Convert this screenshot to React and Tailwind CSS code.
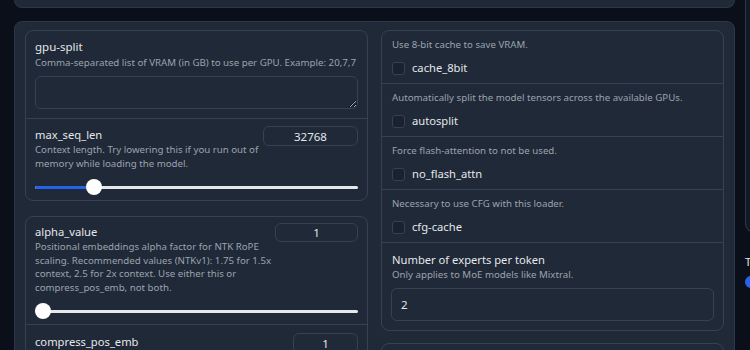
import React from "react";

const desc = "text-[9.7px] leading-[14px] text-[#9ca3af]";
const lbl = "text-[11.2px] leading-[16px] text-[#e5e7eb]";
const numInput =
  "block rounded-[6px] border border-[#374151] bg-[#1f2937] text-center text-[11.5px] leading-[17px] text-[#e5e7eb] outline-none";

function Slider({ fill }) {
  return (
    <div className="relative h-[16px] flex items-center">
      <div className="h-[3px] w-full rounded-full bg-[#e5e7eb]" />
      <div
        className="absolute left-0 top-[6.5px] h-[3px] rounded-l-full bg-[#2563eb]"
        style={{ width: fill }}
      />
      <div
        className="absolute top-0 h-[16px] w-[16px] rounded-full bg-white"
        style={{ left: Math.max(0, fill - 8) }}
      />
    </div>
  );
}

function CheckSection({ text, name, first }) {
  return (
    <div className={`px-[10px] pt-[7px] pb-[7px] ${first ? "" : "border-t border-[#374151]"}`}>
      <div className={desc}>{text}</div>
      <div className="mt-[8px] flex h-[16px] items-center gap-[7px]">
        <div className="h-[13px] w-[13px] rounded-[3px] border border-[#374151] bg-[#1a2230]" />
        <span className="text-[11.2px] leading-[16px] text-[#e5e7eb]">{name}</span>
      </div>
    </div>
  );
}

export default function App() {
  return (
    <div
      className="flex h-[350px] w-[750px] gap-[10px] overflow-hidden bg-[#0b0f19] pl-[14px]"
      style={{ fontFamily: '"Noto Sans", "Open Sans", sans-serif' }}
    >
      {/* main column */}
      <div className="w-[721px] shrink-0">
        <div className="h-[8px] rounded-b-[8px] border border-t-0 border-[#2d3748] bg-[#1f2937]" />
        <div className="mt-[13px] rounded-[8px] border border-[#2d3748] bg-[#1f2937] px-[10px] pt-[8px] pb-[10px]">
          <div className="grid grid-cols-2 gap-[13px]">
            {/* left column */}
            <div className="flex flex-col">
              <div className="rounded-[8px] border border-[#374151]">
                <div className="px-[9px] pt-[7px] pb-[9px]">
                  <div className="text-[11.5px] leading-[18px] text-[#e5e7eb]">gpu-split</div>
                  <div className={desc}>
                    Comma-separated list of VRAM (in GB) to use per GPU. Example: 20,7,7
                  </div>
                  <textarea
                    readOnly
                    className="mt-[6px] block h-[33px] w-full resize-y rounded-[6px] border border-[#374151] bg-[#1f2937] outline-none"
                  />
                </div>
                <div className="border-t border-[#374151] px-[9px] pt-[8px] pb-[5px]">
                  <div className="flex justify-between">
                    <div className="w-[228px]">
                      <div className={lbl}>max_seq_len</div>
                      <div className={desc}>
                        Context length. Try lowering this if you run out of memory while loading the model.
                      </div>
                    </div>
                    <input readOnly value="32768" className={`${numInput} -mt-[1px] h-[20px] w-[95px]`} />
                  </div>
                  <div className="mt-[8px]">
                    <Slider fill={58.5} />
                  </div>
                </div>
              </div>

              <div className="mt-[15px] rounded-[8px] border border-[#374151]">
                <div className="px-[9px] pt-[7px] pb-[5px]">
                  <div className="flex justify-between">
                    <div className="w-[238px]">
                      <div className={lbl}>alpha_value</div>
                      <div className="text-[9.7px] leading-[13.5px] text-[#9ca3af]">
                        Positional embeddings alpha factor for NTK RoPE scaling. Recommended values (NTKv1): 1.75 for 1.5x context, 2.5 for 2x context. Use either this or compress_pos_emb, not both.
                      </div>
                    </div>
                    <input readOnly value="1" className={`${numInput} -mt-[1px] h-[19px] w-[83px]`} />
                  </div>
                  <div className="mt-[9px]">
                    <Slider fill={8} />
                  </div>
                </div>
                <div className="border-t border-[#374151] px-[9px] pt-[9px] pb-[10px]">
                  <div className="flex justify-between">
                    <div className={lbl}>compress_pos_emb</div>
                    <input readOnly value="1" className={`${numInput} -mt-[1px] h-[20px] w-[65px]`} />
                  </div>
                  <div className={`${desc} mt-[2px]`}>
                    Positional embeddings compression factor.
                  </div>
                </div>
              </div>
            </div>

            {/* right column */}
            <div className="flex flex-col">
              <div className="rounded-[8px] border border-[#374151]">
                <CheckSection first text="Use 8-bit cache to save VRAM." name="cache_8bit" />
                <CheckSection text="Automatically split the model tensors across the available GPUs." name="autosplit" />
                <CheckSection text="Force flash-attention to not be used." name="no_flash_attn" />
                <CheckSection text="Necessary to use CFG with this loader." name="cfg-cache" />
                <div className="border-t border-[#374151] px-[10px] pt-[9px] pb-[9px]">
                  <div className={lbl}>Number of experts per token</div>
                  <div className="text-[9.7px] leading-[13px] text-[#9ca3af]">
                    Only applies to MoE models like Mixtral.
                  </div>
                  <div className="-mx-[1px] mt-[7px] flex h-[33px] items-center rounded-[6px] border border-[#374151] px-[9px] text-[11.5px] text-[#e5e7eb]">
                    2
                  </div>
                </div>
              </div>
              <div className="mt-[12px] h-[60px] rounded-[8px] border border-[#374151]" />
            </div>
          </div>
        </div>
      </div>

      {/* partially visible right column */}
      <div className="w-[200px] shrink-0">
        <div className="h-[232px] rounded-b-[8px] border border-t-0 border-[#2d3748] bg-[#111827]" />
        <div className="mt-[22px] text-[11.2px] leading-[16px] text-[#e5e7eb]">T</div>
        <div className="mt-[6px] h-[12px] w-[12px] rounded-full bg-[#2563eb]" />
      </div>
    </div>
  );
}
